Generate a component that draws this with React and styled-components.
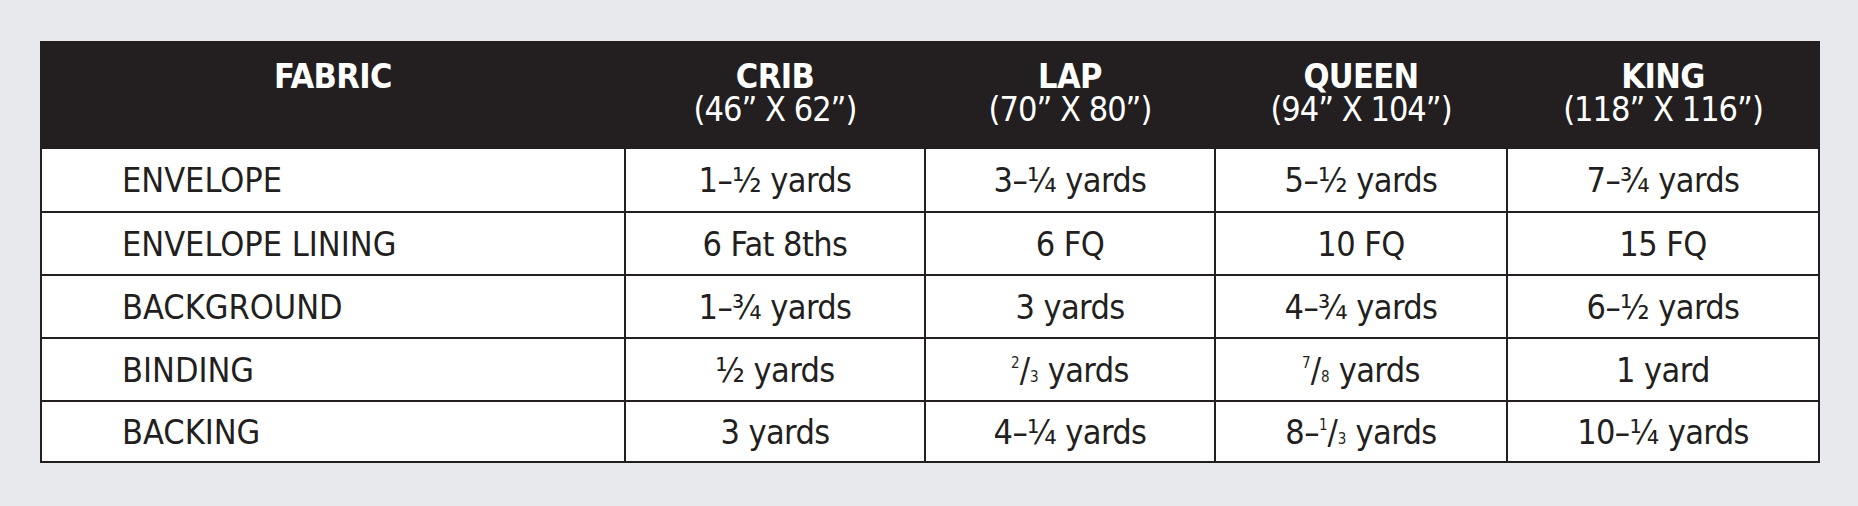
import React from "react";
import styled, { createGlobalStyle } from "styled-components";

const GlobalStyle = createGlobalStyle`
  html, body {
    margin: 0;
    padding: 0;
    background: #e8e9ed;
  }
  body {
    font-family: "Liberation Sans Narrow", "Arial Narrow", "DejaVu Sans Condensed", sans-serif;
    color: #231f20;
  }
`;

const Page = styled.div`
  padding: 41px 38px 43px 40px;
`;

const Grid = styled.div`
  display: grid;
  grid-template-columns: 582px 298px 288px 290px 310px;
  grid-template-rows: 104px 62px 61px 61px 61px 59px;
  gap: 2px;
  padding: 2px;
  width: max-content;
  background: #231f20;
`;

const HeadCell = styled.div`
  background: #231f20;
  color: #ffffff;
  text-align: center;
  padding-top: 17px;
  font-size: 34px;
  line-height: 33px;
`;

const HeadTitle = styled.div`
  font-weight: 700;
  letter-spacing: -0.6px;
`;

const HeadSize = styled.div`
  font-weight: 400;
  letter-spacing: -1px;
`;

const Cell = styled.div`
  background: #ffffff;
  display: flex;
  align-items: center;
  justify-content: ${(p) => (p.$label ? "flex-start" : "center")};
  padding-left: ${(p) => (p.$label ? "80px" : "0")};
  font-size: 34px;
  letter-spacing: ${(p) => (p.$label ? "0" : "-0.6px")};
  white-space: pre;
`;

const Frac = styled.span`
  letter-spacing: 0;
`;

const Num = styled.span`
  font-size: 15px;
  vertical-align: 14px;
`;

const Den = styled.span`
  font-size: 15px;
`;

const F = ({ n, d }) => (
  <Frac>
    <Num>{n}</Num>/<Den>{d}</Den>
  </Frac>
);

const headers = [
  { title: "FABRIC" },
  { title: "CRIB", size: "(46\u201D X 62\u201D)" },
  { title: "LAP", size: "(70\u201D X 80\u201D)" },
  { title: "QUEEN", size: "(94\u201D X 104\u201D)" },
  { title: "KING", size: "(118\u201D X 116\u201D)" },
];

const rows = [
  ["ENVELOPE", "1\u2013\u00BD yards", "3\u2013\u00BC yards", "5\u2013\u00BD yards", "7\u2013\u00BE yards"],
  ["ENVELOPE LINING", "6 Fat 8ths", "6 FQ", "10 FQ", "15 FQ"],
  ["BACKGROUND", "1\u2013\u00BE yards", "3 yards", "4\u2013\u00BE yards", "6\u2013\u00BD yards"],
  [
    "BINDING",
    "\u00BD yards",
    <>
      <F n="2" d="3" />
      {" yards"}
    </>,
    <>
      <F n="7" d="8" />
      {" yards"}
    </>,
    "1 yard",
  ],
  [
    "BACKING",
    "3 yards",
    "4\u2013\u00BC yards",
    <>
      {"8\u2013"}
      <F n="1" d="3" />
      {" yards"}
    </>,
    "10\u2013\u00BC yards",
  ],
];

const App = () => {
  return (
    <Page>
      <GlobalStyle />
      <Grid>
        {headers.map((h) => (
          <HeadCell key={h.title}>
            <HeadTitle>{h.title}</HeadTitle>
            {h.size && <HeadSize>{h.size}</HeadSize>}
          </HeadCell>
        ))}
        {rows.map((row) =>
          row.map((value, i) => (
            <Cell key={row[0] + i} $label={i === 0}>
              {value}
            </Cell>
          ))
        )}
      </Grid>
    </Page>
  );
};

export default App;
